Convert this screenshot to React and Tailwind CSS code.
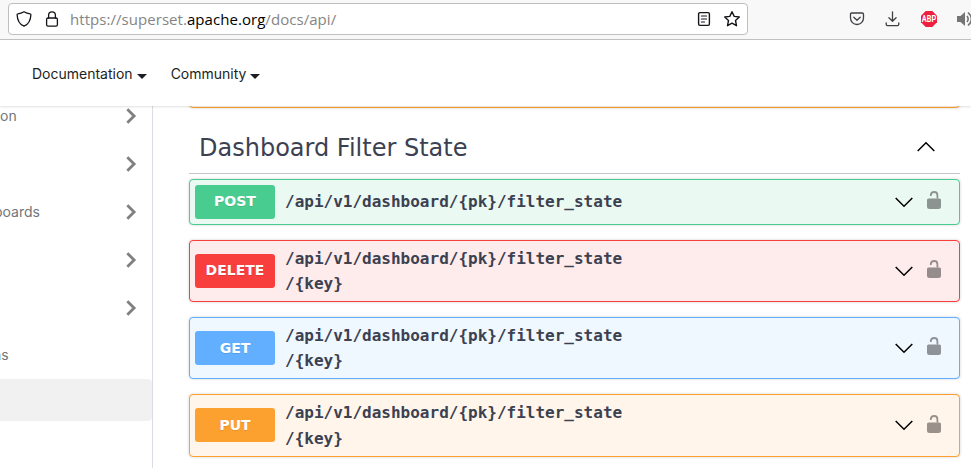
import React from "react";

const stroke = {
  fill: "none",
  stroke: "currentColor",
  strokeLinecap: "round",
  strokeLinejoin: "round",
};

function BrowserBar() {
  return (
    <div className="flex h-10 shrink-0 items-start border-b border-[#c2c2c2] bg-[#f8f8f8] pl-2 pt-[3px] text-[#15141a]">
      <div className="flex h-8 w-[740px] shrink-0 items-center rounded-[4px] border border-[#bfbfbf] bg-white pl-[7px] pr-[6px]">
        <svg width="16" height="16" viewBox="0 0 16 16" {...stroke} strokeWidth="1.3" className="shrink-0">
          <path d="M8 .8C6.2 2 3.8 2.7 1.8 2.8C1.3 2.8 1.1 3.2 1.1 3.7C1.3 9 3.5 13.2 8 15.2C12.5 13.2 14.7 9 14.9 3.7C14.9 3.2 14.7 2.8 14.2 2.8C12.2 2.7 9.8 2 8 .8Z" />
        </svg>
        <svg width="16" height="16" viewBox="0 0 16 16" {...stroke} strokeWidth="1.3" className="ml-3 shrink-0">
          <rect x="2.6" y="7" width="10.8" height="8.2" rx="1.4" />
          <path d="M4.6 7V4.2A3.4 3.4 0 0 1 11.4 4.2V7" />
        </svg>
        <div className="ml-[10px] whitespace-nowrap font-['Open_Sans',sans-serif] text-[15px] leading-5 tracking-[0.05px] text-[#858585]">
          https://superset.<span className="text-black">apache.org</span>/docs/api/
        </div>
        <svg width="16" height="16" viewBox="0 0 16 16" {...stroke} strokeWidth="1.4" className="ml-auto shrink-0">
          <rect x="2.6" y="1.6" width="10.8" height="12.8" rx="1.3" />
          <path d="M5.4 5H10.6M5.4 8H10.6M5.4 11H8.6" strokeWidth="1.1" />
        </svg>
        <svg width="18" height="18" viewBox="0 0 18 18" {...stroke} strokeWidth="1.4" className="ml-[11px] shrink-0">
          <path d="M9 1.7L11.2 6.4L16.3 7L12.5 10.5L13.5 15.7L9 13.2L4.5 15.7L5.5 10.5L1.7 7L6.8 6.4Z" />
        </svg>
      </div>
      <div className="flex h-8 items-center pl-[101px] text-[#3f3f44]">
        <svg width="16" height="16" viewBox="0 0 16 16" {...stroke} strokeWidth="1.3" className="shrink-0">
          <path d="M2.8 2H13.2Q14.5 2 14.5 3.3V7A6.5 6.5 0 0 1 1.5 7V3.3Q1.5 2 2.8 2Z" />
          <path d="M4.8 6.2L8 9.2L11.2 6.2" />
        </svg>
        <svg width="16" height="16" viewBox="0 0 16 16" {...stroke} strokeWidth="1.3" className="ml-5 shrink-0">
          <path d="M7.5 .8V10M3.9 6.8L7.5 10.2L11.1 6.8M1.2 11.8V13.2Q1.2 14.6 2.5 14.6H12.5Q13.8 14.6 13.8 13.2V11.8" />
        </svg>
        <svg width="16" height="16" viewBox="0 0 16 16" className="ml-5 shrink-0 overflow-visible">
          <path d="M4.7 0H11.3L16 4.7V11.3L11.3 16H4.7L0 11.3V4.7Z" fill="#ef1f41" />
          <text x="0.8" y="11" textLength="14.4" lengthAdjust="spacingAndGlyphs" fontSize="8.5" fontWeight="700" fontFamily="Roboto, sans-serif" fill="#fff">
            ABP
          </text>
        </svg>
        <svg width="18" height="16" viewBox="0 0 18 16" className="ml-5 shrink-0 text-[#757575]">
          <path d="M0 5H3.5L8 1V15L3.5 11H0Z" fill="currentColor" />
          <path d="M10 5Q12.3 8 10 11M11 1.5Q18 8 11 14.5" fill="none" stroke="currentColor" strokeWidth="1.6" />
        </svg>
      </div>
    </div>
  );
}

function NavItem({ label }) {
  return (
    <div className="flex items-center gap-1">
      <span>{label}</span>
      <svg width="10" height="5" viewBox="0 0 10 5" className="mt-[5px]">
        <path d="M0 0H10L5 5Z" fill="currentColor" />
      </svg>
    </div>
  );
}

function NavBar() {
  return (
    <nav className="z-10 flex h-[66px] shrink-0 items-center gap-6 bg-white pl-8 pr-8 pt-px font-['Inter',sans-serif] text-[14px] leading-5 text-[#1c1e21] shadow-[0_1px_2px_0_rgba(0,0,0,0.12)]">
      <NavItem label="Documentation" />
      <NavItem label="Community" />
    </nav>
  );
}

const sidebarRows = [
  { text: "on", shift: "ml-0", caret: true },
  { text: "", shift: "ml-0", caret: true },
  { text: "boards", shift: "-ml-[6px]", caret: true },
  { text: "", shift: "ml-0", caret: true },
  { text: "", shift: "ml-0", caret: true },
  { text: "ns", shift: "-ml-[7px]", caret: false },
];

function Sidebar() {
  return (
    <aside className="w-[153px] shrink-0 overflow-hidden border-r border-[#dadde1] font-['Inter',sans-serif] text-[14px] text-[#737679]">
      <div className="-mt-[14px] flex flex-col">
        {sidebarRows.map((row, i) => (
          <div key={i} className="flex h-12 items-center justify-between pr-[14px] last:h-[46px]">
            <span className={`pb-[2px] ${row.shift}`}>{row.text}</span>
            {row.caret && (
              <svg width="12" height="18" viewBox="0 0 12 18" className="text-[#808080]">
                <path d="M1.3 2.2L8.1 9L1.3 15.8" fill="none" stroke="currentColor" strokeWidth="2.8" />
              </svg>
            )}
          </div>
        ))}
      </div>
      <div className="mt-px h-[42px] rounded-r-[4px] bg-[#f1f1f1]" />
    </aside>
  );
}

function Arrow({ up = false }) {
  return (
    <svg width="20" height="20" viewBox="0 0 20 20" className="shrink-0 text-black">
      <path d={up ? "M1.7 14L10 5.7L18.3 14" : "M1.7 6L10 14.3L18.3 6"} fill="none" stroke="currentColor" strokeWidth="1.5" />
    </svg>
  );
}

function Unlock() {
  return (
    <svg width="14" height="19" viewBox="0 0 14 19" className="shrink-0 text-black opacity-40">
      <path d="M1.5 7.5H12.5Q14 7.5 14 9V15.5Q14 18 11.5 18H2.5Q0 18 0 15.5V9Q0 7.5 1.5 7.5Z" fill="currentColor" />
      <path d="M3.8 5V4.2Q4 1 7.2 1Q10.4 1 10.4 4.2V7.5" fill="none" stroke="currentColor" strokeWidth="1.8" />
    </svg>
  );
}

const operations = [
  { method: "POST", lines: ["/api/v1/dashboard/{pk}/filter_state"], box: "h-[46px] border-[#49cc90] bg-[#ebf9f3]", badge: "bg-[#49cc90] pb-px", arrow: "mb-0", lock: "pb-[3px]" },
  { method: "DELETE", lines: ["/api/v1/dashboard/{pk}/filter_state", "/{key}"], box: "h-[62px] border-[#f93e3e] bg-[#feebeb]", badge: "bg-[#f93e3e] pb-px", arrow: "mb-0", lock: "pb-[3px]" },
  { method: "GET", lines: ["/api/v1/dashboard/{pk}/filter_state", "/{key}"], box: "h-[62px] border-[#61affe] bg-[#eff7ff]", badge: "bg-[#61affe] pt-px", arrow: "mb-0", lock: "pb-[3px]" },
  { method: "PUT", lines: ["/api/v1/dashboard/{pk}/filter_state", "/{key}"], box: "h-[63px] border-[#fca130] bg-[#fff5ea]", badge: "mb-px bg-[#fca130]", arrow: "mb-px", lock: "pb-[2px]" },
];

function Operation({ method, lines, box, badge, arrow, lock }) {
  return (
    <div className={`flex shrink-0 items-center rounded-[4px] border pl-[5px] pr-[18px] shadow-[0_0_3px_rgba(0,0,0,0.19)] ${box}`}>
      <div className={`flex h-[34px] w-20 shrink-0 items-center justify-center rounded-[3px] font-['DejaVu_Sans',sans-serif] text-[14px] font-bold text-white [text-shadow:0_1px_0_rgba(0,0,0,0.1)] ${badge}`}>
        {method}
      </div>
      <div className="ml-[10px] flex flex-col whitespace-nowrap font-['DejaVu_Sans_Mono',monospace] text-[16px] font-bold leading-[25.4px] text-[#3b4151]">
        {lines.map((line) => (
          <span key={line}>{line}</span>
        ))}
      </div>
      <div className="ml-auto flex items-center gap-[13px]">
        <div className={arrow}>
          <Arrow />
        </div>
        <div className={lock}>
          <Unlock />
        </div>
      </div>
    </div>
  );
}

export default function App() {
  return (
    <div className="flex h-[468px] w-[971px] flex-col overflow-hidden bg-white">
      <BrowserBar />
      <NavBar />
      <div className="flex min-h-0 flex-1">
        <Sidebar />
        <main className="flex min-w-0 flex-1 flex-col overflow-hidden pl-9 pr-[11px]">
          <div className="-mt-[10px] h-3 shrink-0 rounded-[4px] border border-[#fca130] bg-[#fff5ea] shadow-[0_0_3px_rgba(0,0,0,0.19)]" />
          <div className="mt-3 flex h-[54px] shrink-0 items-center justify-between border-b border-[#c4c6cb] pl-[10px] pr-6">
            <h3 className="pt-[2px] font-['DejaVu_Sans',sans-serif] text-[24px] leading-8 text-[#3b4151]">Dashboard Filter State</h3>
            <Arrow up />
          </div>
          <div className="mt-[5px] flex flex-col gap-[15px]">
            {operations.map((op) => (
              <Operation key={op.method} {...op} />
            ))}
          </div>
        </main>
      </div>
    </div>
  );
}
